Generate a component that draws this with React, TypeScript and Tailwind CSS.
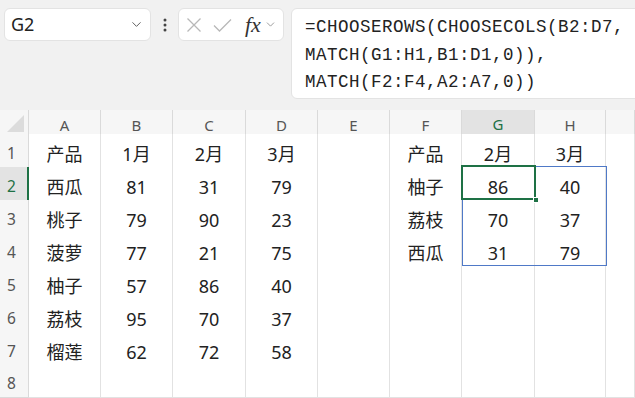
import { ChevronDown } from "lucide-react";

const cols = ["A", "B", "C", "D", "E", "F", "G", "H", ""];

const rows: string[][] = [
  ["产品", "1月", "2月", "3月", "", "产品", "2月", "3月", ""],
  ["西瓜", "81", "31", "79", "", "柚子", "86", "40", ""],
  ["桃子", "79", "90", "23", "", "荔枝", "70", "37", ""],
  ["菠萝", "77", "21", "75", "", "西瓜", "31", "79", ""],
  ["柚子", "57", "86", "40", "", "", "", "", ""],
  ["荔枝", "95", "70", "37", "", "", "", "", ""],
  ["榴莲", "62", "72", "58", "", "", "", "", ""],
  ["", "", "", "", "", "", "", "", ""],
];

const gridCols =
  "grid grid-cols-[29px_72px_72px_73px_72px_72px_72px_73px_71px_1fr]";

function FormulaBar() {
  return (
    <div className="flex h-[110px] items-start bg-[#f1f1f1] pt-[8px] pl-[4px]">
      {/* name box */}
      <div className="flex h-[33px] w-[147px] shrink-0 items-center justify-between rounded-[6px] border border-[#e3e3e3] bg-white pr-[6px] pl-[6px]">
        <span className="text-[18px] text-[#222]">G2</span>
        <ChevronDown className="size-[15px] text-[#555]" strokeWidth={1.5} />
      </div>
      <div className="flex h-[33px] w-[27px] shrink-0 items-center justify-center">
        <svg width="4" height="14" viewBox="0 0 4 14">
          <circle cx="2" cy="2" r="1.5" fill="#444" />
          <circle cx="2" cy="7" r="1.5" fill="#444" />
          <circle cx="2" cy="12" r="1.5" fill="#444" />
        </svg>
      </div>
      {/* cancel / enter / fx */}
      <div className="flex h-[33px] w-[106px] shrink-0 items-center rounded-[6px] border border-[#e3e3e3] bg-white pl-[7px]">
        <svg width="16" height="16" viewBox="0 0 16 16" className="shrink-0">
          <path d="M1.5 1.5 L14.5 14.5 M14.5 1.5 L1.5 14.5" stroke="#b8b8b8" strokeWidth="1.3" fill="none" />
        </svg>
        <svg width="19" height="14" viewBox="0 0 19 14" className="ml-[11px] shrink-0">
          <path d="M1 7.5 L6.5 13 L18 1.5" stroke="#b8b8b8" strokeWidth="1.3" fill="none" />
        </svg>
        <span className="ml-[13px] font-['Liberation_Serif',serif] text-[22px] italic leading-none text-[#333]">
          fx
        </span>
        <ChevronDown className="ml-[3px] size-[13px] shrink-0 text-[#888]" strokeWidth={1.5} />
      </div>
      {/* formula */}
      <div className="ml-[7px] h-[91px] w-[360px] shrink-0 rounded-[6px] border border-[#e3e3e3] bg-white pt-[5px] pl-[13px] font-['Liberation_Mono',monospace] text-[17.5px] leading-[27.5px] tracking-[0.5px] text-[#222]">
        <div>=CHOOSEROWS(CHOOSECOLS(B2:D7,</div>
        <div>MATCH(G1:H1,B1:D1,0)),</div>
        <div>MATCH(F2:F4,A2:A7,0))</div>
      </div>
    </div>
  );
}

function Sheet() {
  return (
    <div className="relative">
      {/* column headers */}
      <div className={`${gridCols} h-[24px] bg-[#f6f6f6]`}>
        <div className="flex items-center justify-center border-r border-b border-[#dadada]">
          <svg width="19" height="18" viewBox="0 0 19 18" className="mt-[2px] ml-[2px]">
            <path d="M18 0 L18 17 L1 17 Z" fill="#dcdcdc" />
          </svg>
        </div>
        {cols.map((c, i) => (
          <div
            key={i}
            className={
              c === "G"
                ? "flex items-center justify-center border-r border-b-2 border-r-[#dadada] border-b-[#1e7145] bg-[#e3e3e3] pt-[3px] text-[15px] text-[#1e7145]"
                : "flex items-center justify-center border-r border-b border-[#dadada] pt-[3px] text-[15px] text-[#555]"
            }
          >
            {c}
          </div>
        ))}
      </div>
      {/* rows */}
      {rows.map((r, ri) => (
        <div key={ri} className={`${gridCols} h-[33px]`}>
          <div
            className={
              ri === 1
                ? "flex items-center border-r-2 border-b border-r-[#1e7145] border-b-[#dadada] bg-[#e3e3e3] pt-[5px] pl-[7px] text-[15.5px] text-[#1e7145]"
                : "flex items-center border-r border-b border-[#dadada] bg-[#f6f6f6] pt-[5px] pl-[7px] text-[15.5px] text-[#555]"
            }
          >
            {ri + 1}
          </div>
          {r.map((v, ci) => (
            <div
              key={ci}
              className="flex items-center justify-center border-r border-b border-[#e2e2e2] bg-white pt-[7px] font-['Noto_Sans','Noto_Sans_CJK_SC',sans-serif] text-[18px] text-[#222]"
            >
              {v}
            </div>
          ))}
        </div>
      ))}
      {/* selected range G2:H4 */}
      <div className="pointer-events-none absolute top-[56px] left-[462px] h-[100px] w-[145px] border border-[#4f79c7]" />
      {/* active cell G2 */}
      <div className="pointer-events-none absolute top-[55px] left-[461px] h-[35px] w-[75px] border-2 border-[#1e7145]" />
      <div className="pointer-events-none absolute top-[87px] left-[533px] size-[6px] border border-white bg-[#1e7145]" />
    </div>
  );
}

export default function App() {
  return (
    <div className="h-[398px] w-[635px] overflow-hidden bg-white font-['Noto_Sans','Noto_Sans_CJK_SC',sans-serif]">
      <FormulaBar />
      <Sheet />
    </div>
  );
}
